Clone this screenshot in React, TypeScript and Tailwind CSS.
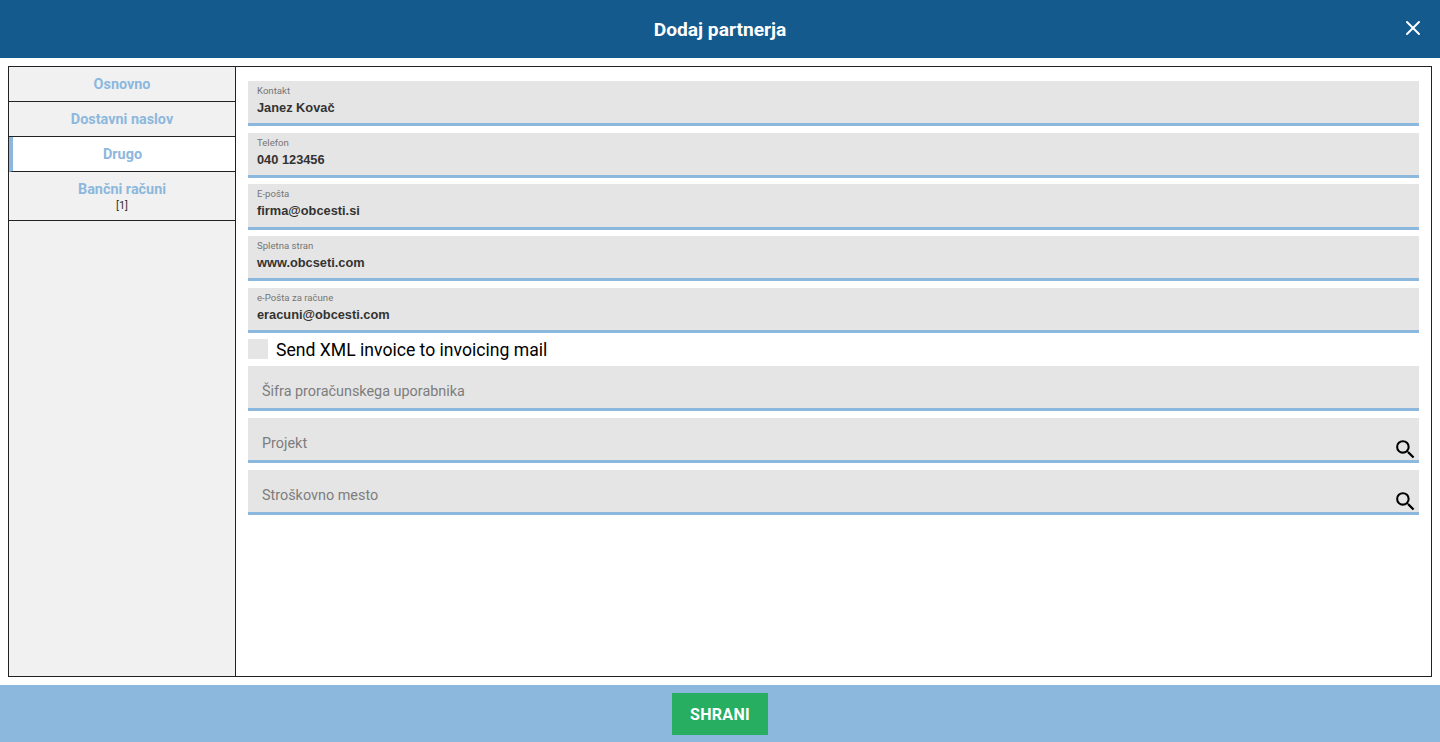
import { X } from "lucide-react"
import { MdSearch } from "react-icons/md"

const tabs = [
  { label: "Osnovno" },
  { label: "Dostavni naslov" },
  { label: "Drugo", active: true },
  { label: "Bančni računi", count: "[1]" },
]

const filled = [
  { label: "Kontakt", value: "Janez Kovač" },
  { label: "Telefon", value: "040 123456" },
  { label: "E-pošta", value: "firma@obcesti.si" },
  { label: "Spletna stran", value: "www.obcseti.com" },
  { label: "e-Pošta za račune", value: "eracuni@obcesti.com" },
]

const empty = [
  { label: "Šifra proračunskega uporabnika" },
  { label: "Projekt", search: true },
  { label: "Stroškovno mesto", search: true },
]

function SideTab({ label, count, active }: { label: string; count?: string; active?: boolean }) {
  return (
    <div
      className={
        active
          ? "h-[35px] bg-white border-b border-l-4 border-b-[#222] border-l-[#8cb8de] pr-[3px] pt-[9px] text-center"
          : "border-b border-[#222] bg-[#f1f1f1] pt-[9px] pb-[7px] flex flex-col items-center"
      }
    >
      <div className="text-[14.4px] leading-[18px] font-bold text-[#8cb8de]">{label}</div>
      {count && <div className="text-[11px] leading-[14px] text-[#333]">{count}</div>}
    </div>
  )
}

function FilledField({ label, value }: { label: string; value: string }) {
  return (
    <div className="h-[45.2px] shrink-0 bg-[#e5e5e5] border-b-[3px] border-[#8cb8de] pl-[9px] pt-[4px]">
      <div className="text-[9.6px] leading-[12px] text-[#757575]">{label}</div>
      <div className="font-['Liberation_Sans',sans-serif] text-[12.8px] leading-[21px] font-bold text-[#333]">{value}</div>
    </div>
  )
}

function EmptyField({ label, search }: { label: string; search?: boolean }) {
  return (
    <div className="relative h-[45.55px] shrink-0 bg-[#e5e5e5] border-b-[3px] border-[#8cb8de] pl-[14px] pt-[16px]">
      <div className="text-[14.4px] leading-[20px] text-[#7d7d7d]">{label}</div>
      {search && <MdSearch className="absolute right-[1px] top-[19px] w-[25px] h-[25px] text-black" />}
    </div>
  )
}

export default function App() {
  return (
    <div className="h-[742px] flex flex-col bg-white font-['Roboto',sans-serif]">
      <header className="relative h-[58px] shrink-0 bg-[#155a8d] flex items-center justify-center">
        <h1 className="text-[19.2px] leading-[28px] pt-px font-bold text-white">Dodaj partnerja</h1>
        <X className="absolute right-[15px] top-[16px] w-[24px] h-[24px] text-white" strokeWidth={2} />
      </header>

      <main className="flex-1 min-h-0 m-[8px] border border-[#222] flex">
        <aside className="w-[227px] shrink-0 bg-[#f1f1f1] border-r border-[#222]">
          {tabs.map((t) => (
            <SideTab key={t.label} {...t} />
          ))}
        </aside>
        <section className="flex-1 pt-[14px] px-[12px] flex flex-col">
          <div className="flex flex-col gap-[6.5px]">
            {filled.map((f) => (
              <FilledField key={f.label} {...f} />
            ))}
          </div>
          <label className="flex items-start gap-[8px] h-[21px] shrink-0 mt-[6px]">
            <span className="w-[20px] h-[20px] bg-[#e5e5e5]" />
            <span className="text-[17.6px] leading-[22px] text-black">Send XML invoice to invoicing mail</span>
          </label>
          <div className="flex flex-col gap-[6.35px] mt-[6px]">
            {empty.map((f) => (
              <EmptyField key={f.label} {...f} />
            ))}
          </div>
        </section>
      </main>

      <footer className="h-[57px] shrink-0 bg-[#8cb8de] flex items-center justify-center">
        <button className="w-[96px] h-[42px] bg-[#27ae60] text-white text-[16px] leading-[43px] font-bold tracking-[0.3px]">SHRANI</button>
      </footer>
    </div>
  )
}
